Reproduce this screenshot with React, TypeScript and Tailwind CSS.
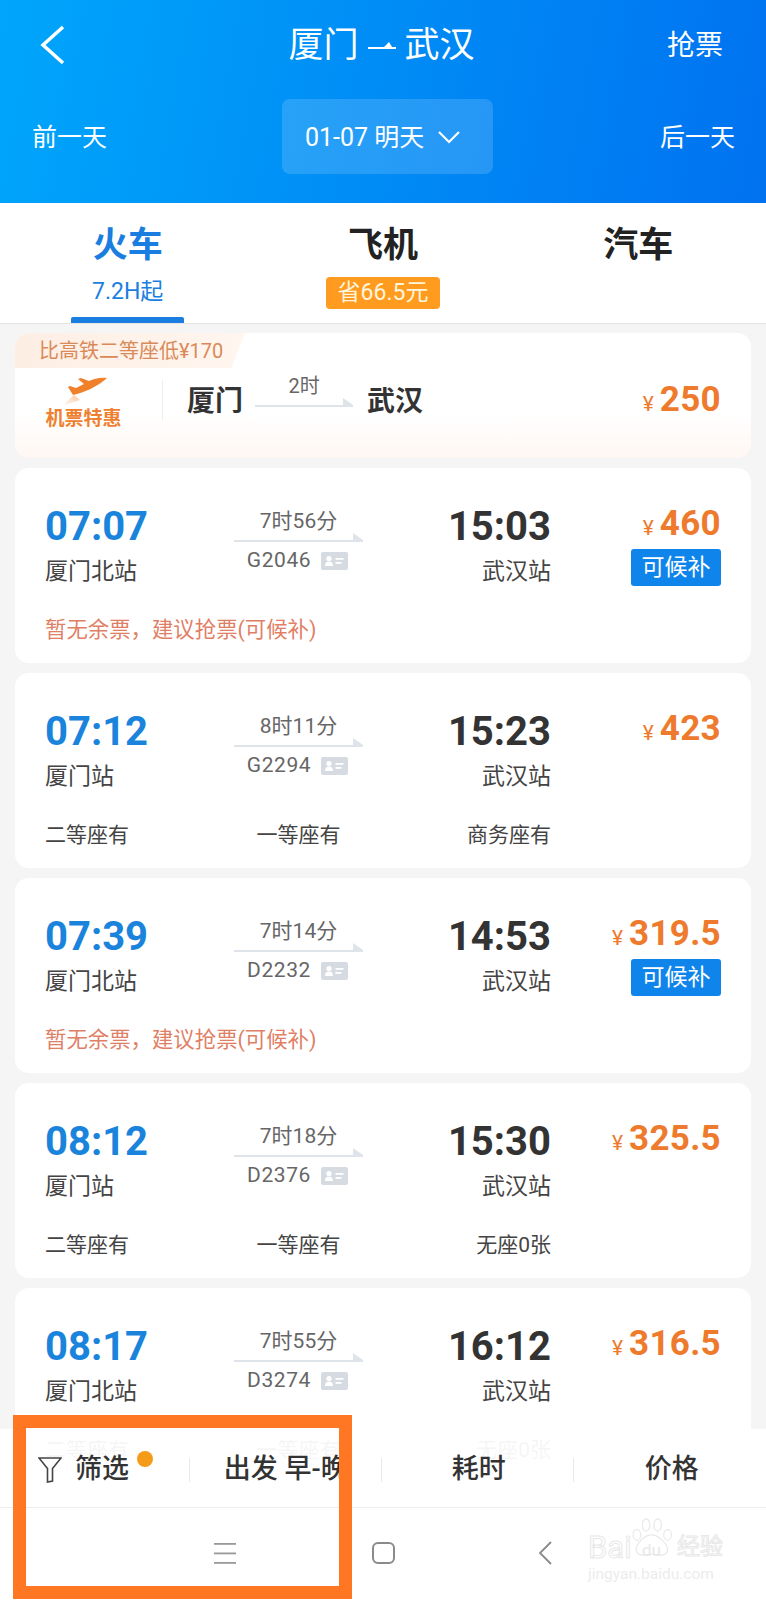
const trains = [
  { dep: "07:07", from: "厦门北站", cost: "7时56分", code: "G2046", arr: "15:03", price: "460", wait: true, seats: [] },
  { dep: "07:12", from: "厦门站", cost: "8时11分", code: "G2294", arr: "15:23", price: "423", wait: false, seats: ["二等座有", "一等座有", "商务座有"] },
  { dep: "07:39", from: "厦门北站", cost: "7时14分", code: "D2232", arr: "14:53", price: "319.5", wait: true, seats: [] },
  { dep: "08:12", from: "厦门站", cost: "7时18分", code: "D2376", arr: "15:30", price: "325.5", wait: false, seats: ["二等座有", "一等座有", "无座0张"] },
  { dep: "08:17", from: "厦门北站", cost: "7时55分", code: "D3274", arr: "16:12", price: "316.5", wait: false, seats: ["二等座有", "一等座有", "无座0张"] },
];

const Price = ({ value }: { value: string }) => (
  <div className="flex items-baseline justify-end text-[#ee7b2d] h-[40px] leading-[44px]">
    <span className="text-[21px] mr-[6px]">¥</span>
    <span className="text-[35px] font-bold tracking-[0.3px]">{value}</span>
  </div>
);

const IdIcon = () => (
  <svg width="27" height="18" viewBox="0 0 27 18" className="ml-[10px]">
    <rect width="27" height="18" rx="2" fill="#d5dbe1" />
    <circle cx="8" cy="6.5" r="2.6" fill="#fff" />
    <path d="M4 14c0-3 1.6-4.4 4-4.4s4 1.4 4 4.4z" fill="#fff" />
    <rect x="14.5" y="6" width="8" height="1.8" fill="#fff" />
    <rect x="14.5" y="10" width="6" height="1.8" fill="#fff" />
  </svg>
);

const Arrow = ({ width }: { width: number }) => (
  <svg width={width} height="10" viewBox={`0 0 ${width} 10`} className="block">
    <path d={`M0 8h${width}v2H0z M${width - 10} 1L${width} 8H${width - 10}z`} fill="#dfe4ea" />
  </svg>
);

const TrainCard = ({ train }: { train: (typeof trains)[number] }) => (
  <div className="bg-white rounded-[14px] mb-[10px] h-[195px] pt-[34px] pl-[30px] pr-[30px]">
    <div className="grid grid-cols-[189px_129px_188px_170px] h-[85px]">
      <div>
        <div className="h-[48px] leading-[50px] text-[40px] font-bold text-[#1a84dc]">{train.dep}</div>
        <div className="mt-[5px] h-[34px] leading-[34px] text-[23px] text-[#444]">{train.from}</div>
      </div>
      <div className="flex flex-col items-center text-[21px] text-[#666]">
        <div className="h-[30px] leading-[38px]">{train.cost}</div>
        <Arrow width={129} />
        <div className="flex items-center h-[30px] mt-[4px] ml-[-2px]">
          <span className="tracking-[0.6px]">{train.code}</span>
          <IdIcon />
        </div>
      </div>
      <div className="text-right">
        <div className="h-[48px] leading-[50px] text-[40px] font-bold text-[#333]">{train.arr}</div>
        <div className="mt-[5px] h-[34px] leading-[34px] text-[23px] text-[#444]">武汉站</div>
      </div>
      <div className="flex flex-col items-end">
        <Price value={train.price} />
        {train.wait && (
          <div className="mt-[7px] w-[90px] h-[37px] rounded-[3px] bg-[#0f85ec] text-white text-[23px] leading-[37px] text-center">
            可候补
          </div>
        )}
      </div>
    </div>
    {train.seats.length > 0 ? (
      <div className="grid grid-cols-[189px_129px_188px] mt-[25px] h-[34px] leading-[36px] text-[21px] text-[#444]">
        <div>{train.seats[0]}</div>
        <div className="text-center">{train.seats[1]}</div>
        <div className="text-right">{train.seats[2]}</div>
      </div>
    ) : (
      <div className="mt-[25px] h-[34px] leading-[35px] text-[21.4px] text-[#df7f66]">暂无余票，建议抢票(可候补)</div>
    )}
  </div>
);

const App = () => {
  return (
    <div className="relative w-[766px] h-[1600px] overflow-hidden bg-[#f5f5f5] font-['Roboto','Noto_Sans_CJK_SC',sans-serif]">
      {/* 顶部 */}
      <div className="h-[203px] bg-[linear-gradient(100deg,#00a6fb,#0072f0)] text-white">
        <div className="grid grid-cols-[1fr_auto_1fr] items-center h-[90px] pl-[40px] pr-[43px]">
          <svg width="26" height="40" viewBox="0 0 26 40" fill="none" stroke="#fff" strokeWidth="3.5">
            <path d="M23 2L3 20l20 18" />
          </svg>
          <div className="flex items-center mt-[2px] text-[35px] leading-[40px]">
            <span>厦门</span>
            <svg width="28" height="10" viewBox="0 0 28 10" className="mx-[9px]">
              <path d="M0 6h28v2H0z M16 6l5-5 3 5z" fill="#fff" />
            </svg>
            <span>武汉</span>
          </div>
          <div className="text-right mt-[2px] text-[28px]">抢票</div>
        </div>
        <div className="grid grid-cols-[1fr_auto_1fr] items-center mt-[9px] pl-[32px] pr-[31px]">
          <div className="text-[25px] pt-[2px]">前一天</div>
          <div className="flex items-center ml-[8px] w-[211px] h-[75px] pl-[23px] rounded-[8px] bg-white/15 text-[25px]">
            <span className="pt-[2px]">01-07 明天</span>
            <svg width="22" height="14" viewBox="0 0 22 14" fill="none" stroke="#fff" strokeWidth="2.2" className="ml-[14px]">
              <path d="M1 2l10 10L21 2" />
            </svg>
          </div>
          <div className="text-right text-[25px] pt-[2px]">后一天</div>
        </div>
      </div>

      {/* 出行方式 */}
      <div className="grid grid-cols-3 h-[121px] bg-white border-b border-[#e5e5e5] text-center">
        <div className="relative flex flex-col items-center pt-[20px] text-[#1a7ee0]">
          <div className="h-[46px] leading-[46px] text-[35px] font-bold">火车</div>
          <div className="mt-[7px] h-[32px] leading-[32px] text-[23px]">7.2H起</div>
          <div className="absolute bottom-0 left-[71px] w-[113px] h-[6px] rounded-t-[2px] bg-[#1a7ee0]" />
        </div>
        <div className="flex flex-col items-center pt-[20px] text-[#222]">
          <div className="h-[46px] leading-[46px] text-[35px] font-bold">飞机</div>
          <div className="mt-[8px] w-[114px] h-[32px] leading-[32px] rounded-[4px] bg-[#ff9b1f] text-[23px] text-[#fff4dc]">省66.5元</div>
        </div>
        <div className="flex flex-col items-center pt-[20px] text-[#222]">
          <div className="h-[46px] leading-[46px] text-[35px] font-bold">汽车</div>
        </div>
      </div>

      {/* 列表 */}
      <div className="px-[15px] pt-[9px]">
        <div className="mb-[10px] h-[125px] rounded-[14px] overflow-hidden bg-[linear-gradient(180deg,#fff_66%,#fff7f3_100%)]">
          <div className="w-[230px] h-[35px] pl-[24px] leading-[36px] text-[20px] text-[#d98a58] bg-[linear-gradient(90deg,#fdeee4,#fff6ef)] [clip-path:polygon(0_0,100%_0,94%_100%,0_100%)]">
            比高铁二等座低¥170
          </div>
          <div className="flex items-start pl-[32px] pr-[30px]">
            <div className="flex flex-col items-center w-[73px] pt-[9px]">
              <svg width="48" height="30" viewBox="0 0 48 30">
                <defs>
                  <linearGradient id="trail" x1="1" y1="0" x2="0" y2="1">
                    <stop offset="0" stopColor="#f9c79f" />
                    <stop offset="1" stopColor="#fff" />
                  </linearGradient>
                </defs>
                <path d="M14 18L2 29l18-6z" fill="url(#trail)" />
                <path d="M47 1c-7-1-13 1-18 3l-8-3-3 1 6 5-8 4-6-2-2 1 5 8c10-2 24-8 34-17z" fill="#f0812a" />
              </svg>
              <div className="text-[19px] leading-[24px] font-bold text-[#ee8030] whitespace-nowrap">机票特惠</div>
            </div>
            <div className="ml-[42px] mt-[12px] w-px h-[40px] bg-[#eeeeee]" />
            <div className="ml-[24px] mt-[16px] text-[28px] leading-[36px] font-bold text-[#333]">厦门</div>
            <div className="ml-[12px] w-[98px] flex flex-col items-center">
              <div className="h-[29px] leading-[36px] text-[20px] text-[#666]">2时</div>
              <Arrow width={98} />
            </div>
            <div className="ml-[14px] mt-[16px] text-[28px] leading-[36px] font-bold text-[#333]">武汉</div>
            <div className="ml-auto mt-[10px]">
              <Price value="250" />
            </div>
          </div>
        </div>
        {trains.map((train) => (
          <TrainCard key={train.code} train={train} />
        ))}
      </div>

      {/* 底部 */}
      <div className="absolute left-0 right-0 bottom-0 h-[171px]">
        <div className="grid grid-cols-4 items-center h-[79px] pt-[3px] bg-white/95 border-b border-[#eeeeee] text-[27px] font-medium text-[#333]">
          <div className="relative flex items-center h-[24px] pl-[38px]">
            <svg width="24" height="26" viewBox="0 0 24 26" fill="none" stroke="#444" strokeWidth="1.6">
              <path d="M1 1h22l-8.5 10.5V24L9.5 25V11.5z" />
            </svg>
            <span className="ml-[13px]">筛选</span>
            <span className="absolute left-[137px] top-[-7px] w-[16px] h-[16px] rounded-full bg-[#f59b1a]" />
            <span className="absolute right-[2px] top-0 w-px h-[24px] bg-[#e8e8e8]" />
          </div>
          <div className="relative flex items-center justify-center h-[24px] whitespace-nowrap">
            <span className="ml-[-3px]">出发 早-晚</span>
            <span className="absolute right-[1px] top-0 w-px h-[24px] bg-[#e8e8e8]" />
          </div>
          <div className="relative flex items-center justify-center h-[24px]">
            耗时
            <span className="absolute right-[1px] top-0 w-px h-[24px] bg-[#e8e8e8]" />
          </div>
          <div className="flex items-center justify-center h-[24px] pl-[3px]">价格</div>
        </div>
        <div className="relative flex items-center h-[92px] bg-white pb-[2px]">
          <svg width="22" height="21" viewBox="0 0 22 21" className="ml-[214px]" fill="#999">
            <rect width="22" height="1.8" />
            <rect y="9.5" width="22" height="1.8" />
            <rect y="19" width="22" height="1.8" />
          </svg>
          <svg width="23" height="22" viewBox="0 0 23 22" className="ml-[136px]" fill="none" stroke="#8a8a8a" strokeWidth="2">
            <rect x="1" y="1" width="21" height="20" rx="5" />
          </svg>
          <svg width="14" height="24" viewBox="0 0 14 24" className="ml-[143px]" fill="none" stroke="#8a8a8a" strokeWidth="1.8">
            <path d="M13 1L2 12l11 11" />
          </svg>
          {/* 水印 */}
          <div className="absolute left-[588px] top-[10px] w-[136px] h-[70px]">
            <svg width="46" height="40" viewBox="0 0 60 52" className="absolute left-[42px] top-0" fill="none" stroke="#e8e8e8" strokeWidth="1.5">
              <ellipse cx="9" cy="22" rx="5" ry="7" />
              <ellipse cx="21" cy="9" rx="5" ry="8" />
              <ellipse cx="36" cy="9" rx="5" ry="8" />
              <ellipse cx="49" cy="22" rx="5" ry="7" />
              <path d="M28 22c-9 0-20 12-20 19 0 6 6 8 11 7 6-1 12-1 18 0 6 1 12-1 12-7 0-7-12-19-21-19z" />
            </svg>
            <span className="absolute left-0 top-[12px] text-[31px] leading-[36px] text-transparent [-webkit-text-stroke:1px_#e8e8e8]">Bai</span>
            <span className="absolute left-[54px] top-[20px] text-[17px] leading-[24px] text-[#e8e8e8]">du</span>
            <span className="absolute left-[89px] top-[14px] text-[23px] leading-[30px] text-transparent [-webkit-text-stroke:1px_#e8e8e8]">经验</span>
            <span className="absolute left-0 top-[46px] text-[15.5px] leading-[20px] whitespace-nowrap text-[#ececec]">jingyan.baidu.com</span>
          </div>
        </div>
      </div>

      {/* 标注框 */}
      <div className="absolute left-[13px] top-[1415px] w-[339px] h-[184px] border-[13px] border-[#ff7722]" />
    </div>
  );
};

export default App;
